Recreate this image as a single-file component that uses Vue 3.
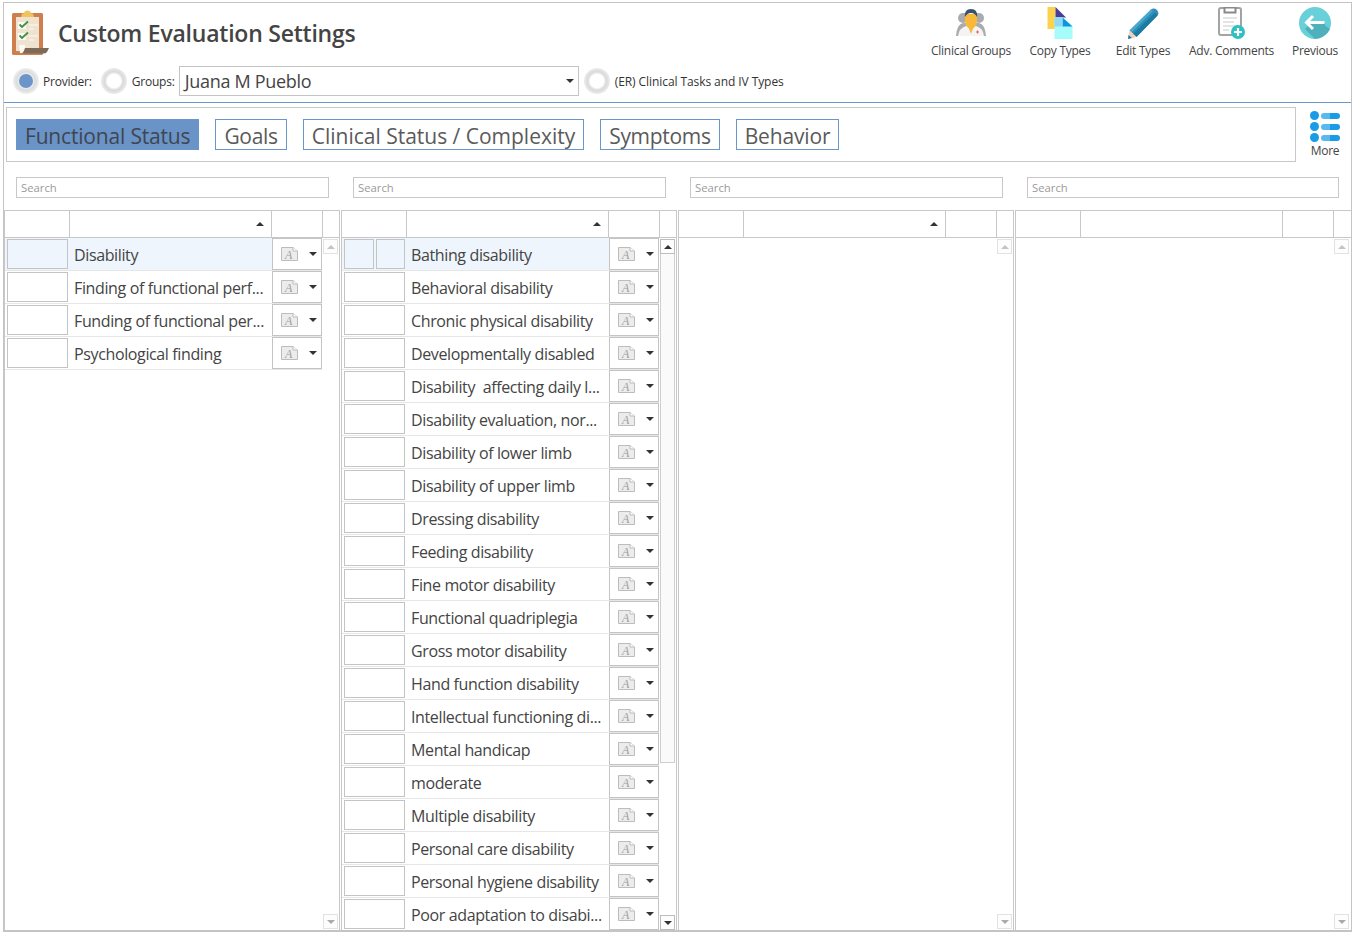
<script setup>
const toolbar = [
  { label: 'Clinical Groups', icon: 'groups', w: 90 },
  { label: 'Copy Types', icon: 'copy', w: 88 },
  { label: 'Edit Types', icon: 'edit', w: 78 },
  { label: 'Adv. Comments', icon: 'adv', w: 99 },
  { label: 'Previous', icon: 'prev', w: 68 }
]
const tabs = [
  { label: 'Functional Status', ls: -0.18 },
  { label: 'Goals', ls: -0.3 },
  { label: 'Clinical Status / Complexity', ls: -0.01 },
  { label: 'Symptoms', ls: -0.3 },
  { label: 'Behavior', ls: -0.15 }
]
const columns = [
  {
    rows: ['Disability', 'Finding of functional perf...', 'Funding of functional per...', 'Psychological finding'],
    sort: true, scroll: 'light'
  },
  {
    rows: ['Bathing disability', 'Behavioral disability', 'Chronic physical disability', 'Developmentally disabled',
      'Disability  affecting daily l...', 'Disability evaluation, nor...', 'Disability of lower limb', 'Disability of upper limb',
      'Dressing disability', 'Feeding disability', 'Fine motor disability', 'Functional quadriplegia', 'Gross motor disability',
      'Hand function disability', 'Intellectual functioning di...', 'Mental handicap', 'moderate', 'Multiple disability',
      'Personal care disability', 'Personal hygiene disability', 'Poor adaptation to disabi...'],
    sort: true, scroll: 'active', split: true
  },
  { rows: [], sort: true, scroll: 'light' },
  { rows: [], sort: false, scroll: 'light' }
]
</script>

<template>
  <div class="frame">
    <header class="head">
      <div class="head-left">
        <div class="title-row">
          <svg class="logo" viewBox="0 0 38 46" width="38" height="46">
            <rect x="0" y="3" width="31" height="42" rx="1.5" fill="#cf7f4e" />
            <path d="M10 3.500 L12 3.500 C12 -0.500 19 -0.500 19 3.500 L21 3.500 L22 7.500 L9 7.500 Z" fill="#efc45c" />
            <rect x="4" y="7" width="23" height="34" fill="#efe3cf" />
            <rect x="6" y="12" width="8" height="7" fill="#fbfbf6" />
            <rect x="6" y="23" width="8" height="7" fill="#fbfbf6" />
            <path d="M7.500 14.500 L10 17 L16 11.500 M7.500 25.500 L10 28 L16 22.500" stroke="#3f8f46" stroke-width="1.800" fill="none" />
            <path d="M17 15 H26 M17 19 H22 M17 26 H26 M17 30 H22" stroke="#fbfbf6" stroke-width="1.200" />
            <path d="M7 35 H13 V40 L10 43 H8 Z" fill="#fbfbf6" />
            <path d="M13 38 H37 L35 42 Q34 43.500 31 43.500 L11 43.500 Z" fill="#7e6a58" />
          </svg>
          <h1 class="title">Custom Evaluation Settings</h1>
        </div>
        <div class="filter-row">
          <span class="radio on"><i></i></span>
          <span class="lbl lbl-provider">Provider:</span>
          <span class="radio"><i></i></span>
          <span class="lbl lbl-groups">Groups:</span>
          <div class="select">
            <span>Juana M Pueblo</span>
            <b class="caret"></b>
          </div>
          <span class="radio radio-er"><i></i></span>
          <span class="lbl lbl-er">(ER) Clinical Tasks and IV Types</span>
        </div>
      </div>
      <nav class="toolbar">
        <div v-for="t in toolbar" :key="t.label" class="tool" :style="{ width: t.w + 'px' }">
          <svg v-if="t.icon === 'groups'" viewBox="0 0 32 32" width="32" height="32">
            <circle cx="8" cy="11" r="5" fill="#a9abae" /><circle cx="24" cy="11" r="5" fill="#a9abae" />
            <path d="M1 29 Q2 17 8 16 L24 16 Q30 17 31 29 Z" fill="#a9abae" />
            <path d="M3 29 Q4 21 11 19 L21 19 Q28 21 29 29 Z" fill="#f4f4f4" />
            <path d="M10 7 H22 V13 Q22 21 16 22 Q10 21 10 13 Z" fill="#f8b83a" />
            <path d="M13 19 L16 27 L19 19 Z" fill="#f8b83a" />
            <path d="M10 10 Q9 2 16 2 Q23 2 22 10 Q20 6 16 6 Q12 6 10 10 Z" fill="#37526b" />
            <path d="M21 25 H24 M22.500 23.500 V26.500" stroke="#e8615a" stroke-width="1" />
          </svg>
          <svg v-else-if="t.icon === 'copy'" viewBox="0 0 32 32" width="32" height="32">
            <path d="M3.500 0 H11.500 V22 H3.500 Z" fill="#fbd24e" />
            <path d="M11.500 0 L22 10.500 H11.500 Z" fill="#4b3a96" />
            <path d="M10.500 10.500 H19 L28.500 19 V32 H10.500 Z" fill="#a6fbfb" />
            <path d="M18.500 10.500 L28.500 19.500 H18.500 Z" fill="#0d96e0" />
            <path d="M10.500 10.500 H18.500 V19.500 H10.500 Z" fill="#8fd9f3" />
          </svg>
          <svg v-else-if="t.icon === 'edit'" viewBox="0 0 32 32" width="32" height="32">
            <path d="M2.500 23.500 L24 2.500 Q27 .5 30 3 Q32.500 6 30.500 8.500 L9.500 30 Z" fill="#2f8fb8" />
            <path d="M6 27 L28 5.500 L30.500 8.500 L9.500 30 Z" fill="#1d7ba3" />
            <path d="M2.500 23.500 L24 2.500 L26 4 L4.500 25.500 Z" fill="#46a9cd" />
            <path d="M2.500 23.500 L9.500 30 L1 32 Z" fill="#f3cdb6" />
            <path d="M1.500 28 L5 31 L1 32 Z" fill="#1d7ba3" />
          </svg>
          <svg v-else-if="t.icon === 'adv'" viewBox="0 0 32 32" width="32" height="32">
            <rect x="3" y="1" width="22" height="27" rx="2" fill="#fff" stroke="#a3a3a3" stroke-width="2" />
            <path d="M8.500 .5 H19.500 V5.500 H8.500 Z" fill="#fff" stroke="#8a8a8a" stroke-width="2" />
            <path d="M7 11 H21 M7 15 H18 M7 19 H21 M7 23 H13" stroke="#c8c8c8" stroke-width="1" />
            <circle cx="22" cy="25" r="7" fill="#2fc0c4" />
            <path d="M22 21 V29 M18 25 H26" stroke="#fff" stroke-width="2.200" />
          </svg>
          <svg v-else viewBox="0 0 32 32" width="32" height="32">
            <circle cx="16" cy="16" r="16" fill="#68d0d8" />
            <path d="M12 16 H26 V18.500 L31 22 Q27 30 16 32 L6 22 Z" fill="#4fafbb" />
            <path d="M14 9 L7.500 15.500 L14 22 M8 15.500 H25.500" stroke="#fff" stroke-width="3" fill="none" />
          </svg>
          <span>{{ t.label }}</span>
        </div>
      </nav>
    </header>

    <section class="tabline">
      <div class="tabs">
        <button
          v-for="(t, i) in tabs"
          :key="t.label"
          class="tab"
          :class="{ active: i === 0 }"
          :style="{ letterSpacing: t.ls + 'px' }"
        >{{ t.label }}</button>
      </div>
      <div class="more">
        <div class="more-lines"><p v-for="n in 3" :key="n"><i></i><b></b></p></div>
        <span>More</span>
      </div>
    </section>

    <section class="searches">
      <input v-for="n in 4" :key="n" class="search" placeholder="Search" />
    </section>

    <section class="grids">
      <div v-for="(c, ci) in columns" :key="ci" class="col">
        <div class="col-head">
          <div class="h1"></div>
          <div class="h2"><b v-if="c.sort" class="sort"></b></div>
          <div class="h3"></div>
          <div class="h4"></div>
        </div>
        <div class="col-body">
          <div class="rows">
            <div v-for="(r, ri) in c.rows" :key="r" class="row" :class="{ sel: ri === 0 }">
              <div class="check">
                <i></i><i v-if="c.split && ri === 0"></i>
              </div>
              <div class="text">{{ r }}</div>
              <div class="btn">
                <svg viewBox="0 0 17 14" width="17" height="14">
                  <path d="M.5 .5 H12 L16.500 4 V13.500 H.5 Z" fill="#ececec" stroke="#bcbcbc" />
                  <path d="M12 .5 V4 H16.500" fill="#fff" stroke="#bcbcbc" />
                  <text x="4" y="11.500" class="btn-a">A</text>
                </svg>
                <b class="caret"></b>
              </div>
            </div>
          </div>
          <div class="scroll" :class="c.scroll">
            <div class="sbtn up"><b></b></div>
            <div v-if="c.scroll === 'active'" class="thumb"></div>
            <div class="spacer"></div>
            <div class="sbtn down"><b></b></div>
          </div>
        </div>
      </div>
    </section>
  </div>
</template>

<style>
html, body { margin: 0; height: 933px; overflow: hidden; background: #fff; }
</style>

<style scoped>
* { box-sizing: border-box; }
.frame {
  width: 1349px;
  height: 930px;
  margin: 2px 0 0 3px;
  border: 1px solid #c4c4c4;
  border-bottom-width: 2px;
  font-family: "Open Sans", "Noto Sans", sans-serif;
  color: #444;
  overflow: hidden;
  display: flex;
  flex-direction: column;
}
.head {
  height: 100px;
  flex: none;
  border-bottom: 1px solid #6a96c9;
  display: flex;
  justify-content: space-between;
}
.head-left { padding-left: 8px; }
.title-row { display: flex; align-items: flex-start; height: 63px; padding-top: 7px; }
.logo { flex: none; }
.title {
  margin: 7px 0 0 8px;
  font-size: 23px;
  line-height: 32px;
  font-weight: 600;
  color: #444;
  letter-spacing: -.23px;
}
.filter-row { display: flex; align-items: center; height: 30px; margin-left: -1px; }
.radio {
  width: 26px; height: 26px; flex: none; border-radius: 50%; margin-left: 2px;
  background: radial-gradient(circle closest-side, #fff 0 50%, #d9d9d9 72%, #ececec 100%);
  display: flex; align-items: center; justify-content: center;
}
.radio.on { background: radial-gradient(circle closest-side, #eef0f4 0 50%, #dcdcdc 72%, #efefef 100%); }
.radio i { width: 14px; height: 14px; border-radius: 50%; background: #fff; filter: blur(.4px); }
.radio.on i { background: #6c95ca; }
.lbl { font-size: 12px; color: #333; margin-left: 4px; white-space: nowrap; letter-spacing: -.2px; }
.lbl-provider { margin-right: 7px; }
.lbl-groups { margin-left: 5px; margin-right: 4px; }
.lbl-er { margin-left: 5px; letter-spacing: -.08px; }
.select {
  width: 400px; height: 30px; border: 1px solid #c4c4c4; display: flex; align-items: center;
  justify-content: space-between; padding: 0 4px 0 5px; font-size: 18px; color: #444; letter-spacing: -.3px;
}
.radio-er { margin-left: 5px; }
.caret { width: 0; height: 0; border: 4px solid transparent; border-top: 4px solid #333; border-bottom: 0; flex: none; }
.toolbar { display: flex; padding: 4px 2px 0 0; }
.tool { display: flex; flex-direction: column; align-items: center; font-size: 12px; color: #444; white-space: nowrap; letter-spacing: -.25px; }
.tool span { margin-top: 4px; line-height: 16px; }
.tabline { flex: none; height: 55px; margin-top: 4px; padding-left: 2px; display: flex; }
.tabs {
  width: 1290px; flex: none; border: 1px solid #c8c8c8; padding: 11px 9px; display: flex; gap: 16px; align-items: flex-start;
}
.tab {
  height: 31px; padding: 3px 8px 0; border: 1px solid #6a96c9; background: #fff; color: #5a5a5a;
  font: 400 21px/27px "Open Sans", "Noto Sans", sans-serif; white-space: nowrap;
}
.tab.active { background: #6a93c7; color: #3e4650; }
.more { width: 58px; flex: none; display: flex; flex-direction: column; align-items: center; padding-top: 4px; font-size: 12px; letter-spacing: -.3px; color: #444; }
.more-lines { width: 30px; height: 32px; display: flex; flex-direction: column; gap: 2px; }
.more-lines p { margin: 0; height: 9px; display: flex; align-items: center; gap: 2px; }
.more-lines i { width: 9px; height: 9px; border-radius: 50%; background: #1a9be6; }
.more-lines b { width: 19px; height: 6px; border-radius: 3px; background: linear-gradient(90deg, #58b9ee 0 50%, #1a9be6 50%); }
.more span { margin-top: 0; line-height: 16px; }
.searches { flex: none; height: 48px; padding: 15px 0 0 12px; display: flex; gap: 24px; }
.search {
  width: 313px; height: 21px; border: 1px solid #c8c8c8; padding: 0 4px; outline: none;
  font: 11.300px "Open Sans", "Noto Sans", sans-serif;
}
.search:last-child { width: 312px; }
.search::placeholder { color: #9a9a9a; opacity: 1; }
.grids { flex: 1; min-height: 0; display: flex; gap: 1px; }
.col { width: 336px; flex: none; border-left: 1px solid #c8c8c8; border-right: 1px solid #c8c8c8; display: flex; flex-direction: column; }
.col:last-child { border-right: 0; }
.col-head { height: 28px; flex: none; display: flex; border-top: 1px solid #c8c8c8; border-bottom: 1px solid #c8c8c8; }
.h1 { width: 65px; border-right: 1px solid #c8c8c8; }
.h2 { width: 202px; border-right: 1px solid #c8c8c8; display: flex; align-items: center; justify-content: flex-end; padding-right: 7px; }
.h3 { width: 51px; border-right: 1px solid #c8c8c8; }
.h4 { flex: 1; }
.sort { width: 0; height: 0; border: 4px solid transparent; border-bottom: 4px solid #333; border-top: 0; }
.col-body { flex: 1; min-height: 0; display: flex; overflow: hidden; }
.rows { width: 317px; flex: none; }
.row { height: 33px; display: flex; border-bottom: 1px solid #e6e6e6; }
.row.sel { background: #eef5fc; }
.check { width: 65px; padding: 1px 2px; display: flex; gap: 2px; flex: none; }
.check i { flex: 1; height: 30px; border: 1px solid #c4c4c4; }
.text { width: 202px; flex: none; padding: 1px 0 0 4px; font-size: 16px; line-height: 33px; color: #444; white-space: pre; overflow: hidden; letter-spacing: -.37px; }
.btn {
  width: 50px; height: 32px; flex: none; background: #fff; border: 1px solid #c4c4c4;
  display: flex; align-items: center; justify-content: space-between; padding: 0 4px 0 8px;
}
.btn-a { font: italic 12px "Liberation Serif", serif; fill: #a0a0a0; }
.scroll { width: 17px; flex: none; padding: 1px 1px 0 1px; display: flex; flex-direction: column; }
.sbtn { height: 15px; flex: none; border: 1px solid #e2e2e2; display: flex; align-items: center; justify-content: center; background: #fdfdfd; }
.sbtn b { width: 0; height: 0; border: 4px solid transparent; }
.up b { border-top: 0; border-bottom: 4px solid #c4c4c4; }
.down b { border-bottom: 0; border-top: 4px solid #aaa; }
.spacer { flex: 1; }
.light .sbtn.down { margin-bottom: 1px; }
.active .sbtn { border-color: #bdbdbd; }
.active .up b { border-bottom-color: #333; }
.active .down b { border-top-color: #333; }
.thumb { height: 509px; flex: none; background: #fafafa; border: 1px solid #cfcfcf; border-top: 0; }
</style>
